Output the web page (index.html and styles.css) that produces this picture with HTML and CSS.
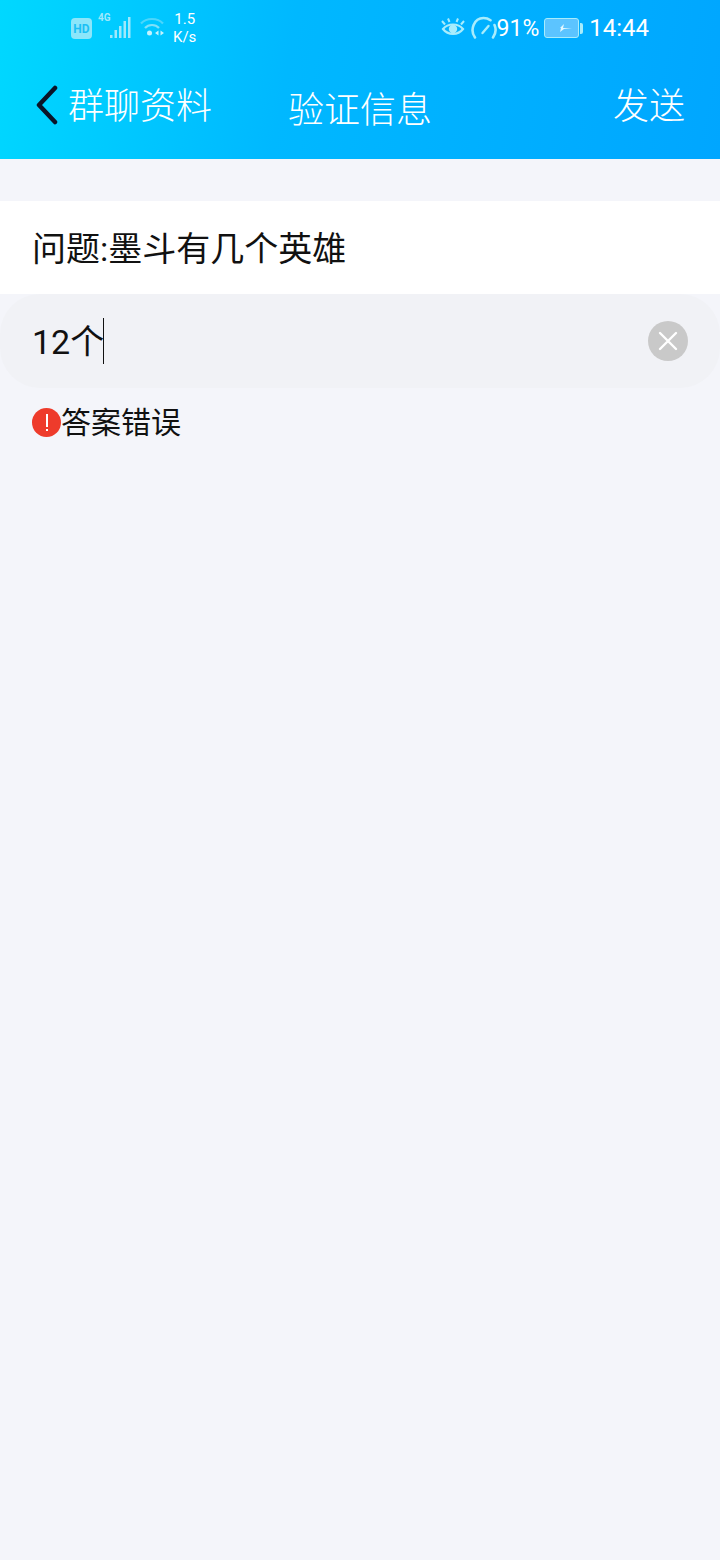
FILE: index.html
```html
<!DOCTYPE html>
<html lang="zh">
<head>
  <meta charset="utf-8">
  <title>验证信息</title>
  <link rel="stylesheet" href="styles.css">
</head>
<body>
  <div class="top">
    <div class="status">
      <div class="status-left">
        <svg class="ic-hd" width="21" height="21" viewBox="0 0 21 21"><rect width="21" height="21" rx="4" fill="#8ce6fa"/><text x="10.500" y="15" text-anchor="middle" class="hd-text">HD</text></svg>
        <svg class="ic-signal" width="35" height="28" viewBox="0 0 35 28">
          <text x="1" y="10" class="g-text">4G</text>
          <g fill="#9fe8fb">
            <rect x="13" y="24" width="2.500" height="3"/>
            <rect x="17.500" y="19" width="2.500" height="8"/>
            <rect x="22" y="15" width="2.500" height="12"/>
            <rect x="26.500" y="10" width="2.500" height="17"/>
            <rect x="31" y="6" width="2.500" height="21"/>
          </g>
        </svg>
        <svg class="ic-wifi" width="24" height="24" viewBox="0 0 24 24" fill="none" stroke="#7fe0f9" stroke-width="2.200">
          <path d="M1 7.500C6.500 1.500 17.500 1.500 23 7.500" opacity=".6"/>
          <path d="M5 12C8.500 8 15.500 8 19 12"/>
          <circle cx="9.500" cy="17" r="2.500" fill="#c5f2fd" stroke="none"/>
          <path d="M15 17l3.500-2.500v5zM24 17l-3.500-2.500v5z" fill="#c5f2fd" stroke="none"/>
        </svg>
        <div class="speed">1.5<br>K/s</div>
      </div>
      <div class="status-right">
        <svg width="24" height="22" viewBox="0 0 24 22" fill="none" stroke="#a8ecfc" stroke-width="2.200">
          <path d="M2 12C7 6 17 6 22 12C17 18.500 7 18.500 2 12Z"/>
          <circle cx="12" cy="12" r="4.200" fill="#a8ecfc" stroke="none"/>
          <path d="M1 4l3 3.500M7 1.500l1.500 3.500M17 1.500L15.500 5M23 4l-3 3.500" stroke-width="2"/>
        </svg>
        <svg class="ic-gauge" width="27" height="24" viewBox="0 0 27 24" fill="none" stroke="#a8ecfc" stroke-width="2.600" stroke-linecap="round">
          <path d="M5 21.500C-.500 14 4 2 13.500 2c3 0 5 .800 7 2.200"/>
          <path d="M24.500 9c2 4.500 1 9-1.500 12.500"/>
          <path d="M12.500 17L18.500 10" stroke-width="2.400"/>
        </svg>
        <span class="pct">91%</span>
        <div class="battery"><div class="batt-body"><svg width="22" height="10" viewBox="0 0 22 10"><path d="M1 5h8l4-4-1 4h9l-8 1-4 3 1-4H1z" fill="#e4f8ff"/></svg></div><div class="batt-tip"></div></div>
        <span class="clock">14:44</span>
      </div>
    </div>
    <div class="nav">
      <div class="nav-left">
        <svg class="back" width="24" height="40" viewBox="0 0 24 40" fill="none" stroke="#0a1428" stroke-width="4.500" stroke-linecap="round" stroke-linejoin="round"><path d="M20 3L4 20L20 37"/></svg>
        <span class="nav-text nav-back-text">群聊资料</span>
      </div>
      <div class="nav-title">验证信息</div>
      <div class="nav-text nav-send">发送</div>
    </div>
  </div>

  <div class="question">问题:墨斗有几个英雄</div>
  <div class="answer">
    <div class="answer-value"><span class="answer-text">12个</span><span class="caret"></span></div>
    <div class="clear">
      <svg width="20" height="20" viewBox="0 0 20 20" stroke="#fff" stroke-width="2.400" stroke-linecap="round"><path d="M2 2L18 18M18 2L2 18"/></svg>
    </div>
  </div>
  <div class="error">
    <div class="error-icon"><span class="bang"></span><span class="dot"></span></div>
    <span class="error-text">答案错误</span>
  </div>
</body>
</html>
```

FILE: styles.css
```css
html, body {
  margin: 0;
  padding: 0;
}

body {
  width: 720px;
  height: 1560px;
  overflow: hidden;
  background-color: #f4f5fa;
  font-family: Roboto, "Noto Sans CJK SC", sans-serif;
  color: #111;
}

.top {
  height: 159px;
  background-image: linear-gradient(100deg, #00d8ff 0%, #00b8ff 40%, #00a6ff 100%);
  color: #fff;
}

.status {
  display: flex;
  justify-content: space-between;
  align-items: center;
  height: 56px;
  padding: 0 71px;
  box-sizing: border-box;
}

.status-left,
.status-right {
  display: flex;
  align-items: center;
}

.hd-text {
  font-size: 12px;
  font-weight: 700;
  fill: #1cc0f5;
}

.g-text {
  font-size: 10px;
  font-weight: 700;
  fill: #9fe8fb;
}

.ic-signal {
  margin-left: 5px;
  margin-bottom: 6px;
}

.ic-wifi {
  margin-left: 8px;
}

.speed {
  margin-left: 9px;
  font-size: 15px;
  line-height: 18px;
  text-align: center;
}

.ic-gauge {
  margin-left: 5px;
}

.pct {
  font-size: 23px;
}

.battery {
  display: flex;
  align-items: center;
  margin-left: 5px;
}

.batt-body {
  display: flex;
  align-items: center;
  justify-content: center;
  width: 33px;
  height: 18px;
  border: 1px solid #a8ecfc;
  border-radius: 3px;
  background: #5cc4ff;
}

.batt-tip {
  width: 3px;
  height: 11px;
  margin-left: 1px;
  background: #a8ecfc;
  border-radius: 0 2px 2px 0;
}

.clock {
  margin-left: 6px;
  font-size: 24px;
}

.nav {
  position: relative;
  display: flex;
  justify-content: space-between;
  align-items: center;
  height: 97px;
  padding: 0 35px;
  box-sizing: border-box;
}

.nav-left {
  display: flex;
  align-items: center;
}

.back {
  margin-right: 9px;
}

.nav-text {
  font-size: 36px;
  font-weight: 300;
  line-height: 50px;
}

.nav-back-text {
  margin-top: 5px;
}

.nav-title {
  position: absolute;
  left: 0;
  right: 0;
  top: 30px;
  text-align: center;
  font-size: 36px;
  font-weight: 300;
  line-height: 50px;
}

.nav-send {
  margin-top: 4px;
}

.question {
  margin-top: 42px;
  height: 93px;
  padding-left: 32px;
  background: #fff;
  font-size: 34px;
  line-height: 97px;
}

.answer {
  display: flex;
  justify-content: space-between;
  align-items: center;
  height: 94px;
  padding: 0 32px;
  background: #f1f2f6;
  border-radius: 40px;
}

.answer-value {
  display: flex;
  align-items: center;
  font-size: 34px;
  line-height: 46px;
}

.answer-text {
  margin-top: 2px;
}

.caret {
  width: 1px;
  height: 46px;
  margin-left: -1px;
  background: #111;
}

.clear {
  display: flex;
  align-items: center;
  justify-content: center;
  width: 40px;
  height: 40px;
  border-radius: 50%;
  background: #c9c9c9;
}

.error {
  display: flex;
  align-items: center;
  padding: 13px 0 0 32px;
  font-size: 30px;
  line-height: 40px;
}

.error-text {
  margin-top: 2px;
}

.error-icon {
  display: flex;
  flex-direction: column;
  align-items: center;
  justify-content: center;
  gap: 2px;
  width: 29px;
  height: 29px;
  border-radius: 50%;
  background: #ee3b2b;
}

.bang {
  width: 2px;
  height: 13px;
  background: #fff;
}

.dot {
  width: 2px;
  height: 2px;
  background: #fff;
}
```
